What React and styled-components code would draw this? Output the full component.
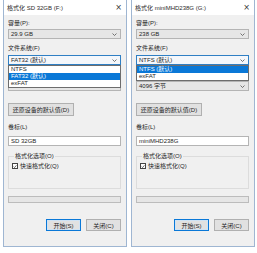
import React from "react";
import styled, { createGlobalStyle } from "styled-components";

const GlobalStyle = createGlobalStyle`
  html, body {
    margin: 0;
    padding: 0;
    background: #ffffff;
  }
  body {
    font-family: "Liberation Sans", "Noto Sans CJK SC", sans-serif;
    font-size: 6px;
    color: #1e1e1e;
  }
`;

const dialogs = [
  {
    title: "格式化 SD 32GB (F:)",
    capacity: "29.9 GB",
    fs: "FAT32 (默认)",
    options: ["NTFS", "FAT32 (默认)", "exFAT"],
    selected: 1,
    alloc: "32 KB",
    volume: "SD 32GB",
  },
  {
    title: "格式化 miniMHD238G (G:)",
    capacity: "238 GB",
    fs: "NTFS (默认)",
    options: ["NTFS (默认)", "exFAT"],
    selected: 0,
    alloc: "4096 字节",
    volume: "miniMHD238G",
  },
];

const Chevron = () => (
  <svg width="5" height="3" viewBox="0 0 5 3">
    <polyline points="0.5,0.5 2.5,2.5 4.5,0.5" fill="none" stroke="#555" strokeWidth="0.8" />
  </svg>
);

const FormatDialog = ({ title, capacity, fs, options, selected, alloc, volume }) => {
  // the open list hides the allocation row when it has three entries
  const allocCovered = options.length > 2;
  return (
    <Window>
      <TitleBar>
        <span>{title}</span>
        <Close>×</Close>
      </TitleBar>
      <Body>
        <Label $top={4}>容量(P):</Label>
        <Combo $top={2}>
          <span>{capacity}</span>
          <Chevron />
        </Combo>
        <Label $top={5}>文件系统(F)</Label>
        <Combo $top={3} $open>
          <span>{fs}</span>
          <Chevron />
          <List>
            {options.map((opt, i) => (
              <Option key={opt} $active={i === selected}>
                {opt}
              </Option>
            ))}
          </List>
        </Combo>
        <Label $top={5} $covered>分配单元大小(A)</Label>
        <Combo $top={3}>
          <Value $covered={allocCovered}>{alloc}</Value>
          <Chevron />
        </Combo>
        <RestoreButton>还原设备的默认值(D)</RestoreButton>
        <Label $top={7}>卷标(L)</Label>
        <TextBox>{volume}</TextBox>
        <Group>
          <legend>格式化选项(O)</legend>
          <CheckRow>
            <CheckBox>
              <svg width="5" height="5" viewBox="0 0 5 5">
                <polyline points="0.8,2.6 2,3.8 4.3,1" fill="none" stroke="#222" strokeWidth="0.8" />
              </svg>
            </CheckBox>
            快速格式化(Q)
          </CheckRow>
        </Group>
        <Progress />
        <ButtonRow>
          <Button $primary>开始(S)</Button>
          <Button>关闭(C)</Button>
        </ButtonRow>
      </Body>
    </Window>
  );
};

export default function App() {
  return (
    <>
      <GlobalStyle />
      <Page>
        {dialogs.map((d) => (
          <FormatDialog key={d.title} {...d} />
        ))}
      </Page>
    </>
  );
}

const Page = styled.div`
  display: flex;
  gap: 4px;
  padding-left: 3px;
  width: 257px;
  height: 253px;
  box-sizing: border-box;
  overflow: hidden;
`;

const Window = styled.div`
  box-sizing: border-box;
  width: 124px;
  height: 247px;
  border: 1px solid #9fb6d2;
  border-top: none;
  background: #f0f0f0;
  display: flex;
  flex-direction: column;
`;

const TitleBar = styled.div`
  height: 15px;
  background: #ffffff;
  display: flex;
  align-items: center;
  justify-content: space-between;
  padding: 0 4px 0 3px;
  color: #2a2a2a;
`;

const Close = styled.span`
  font-family: "DejaVu Sans", sans-serif;
  font-size: 8px;
  color: #333;
`;

const Body = styled.div`
  display: flex;
  flex-direction: column;
  align-items: stretch;
  padding: 0 5px 0 4px;
`;

const Label = styled.div`
  height: 8px;
  line-height: 8px;
  margin-top: ${(p) => p.$top}px;
  white-space: nowrap;
  visibility: ${(p) => (p.$covered ? "hidden" : "visible")};
`;

const Value = styled.span`
  visibility: ${(p) => (p.$covered ? "hidden" : "visible")};
`;

const Combo = styled.div`
  position: relative;
  box-sizing: border-box;
  height: 10px;
  margin-top: ${(p) => p.$top}px;
  display: flex;
  align-items: center;
  justify-content: space-between;
  padding: 0 3px 0 2px;
  background: ${(p) => (p.$open ? "#f4f7fb" : "#e6e6e6")};
  border: 1px solid ${(p) => (p.$open ? "#2f7fc4" : "#b4b4b4")};
  line-height: 8px;
`;

const List = styled.div`
  position: absolute;
  top: 9px;
  left: -1px;
  right: -1px;
  z-index: 2;
  background: #ffffff;
  border: 1px solid #6d6d6d;
`;

const Option = styled.div`
  height: 7px;
  line-height: 7px;
  padding-left: 2px;
  background: ${(p) => (p.$active ? "#0a78d7" : "transparent")};
  color: ${(p) => (p.$active ? "#ffffff" : "#1e1e1e")};
`;

const RestoreButton = styled.div`
  box-sizing: border-box;
  align-self: flex-start;
  width: 66px;
  height: 13px;
  margin-top: 12px;
  background: #e1e1e1;
  border: 1px solid #b0b0b0;
  display: flex;
  align-items: center;
  justify-content: center;
`;

const TextBox = styled.div`
  box-sizing: border-box;
  height: 10px;
  margin-top: 5px;
  background: #ffffff;
  border: 1px solid #b4b4b4;
  padding-left: 2px;
  line-height: 8px;
`;

const Group = styled.fieldset`
  box-sizing: border-box;
  margin: 6px 0 0 0;
  padding: 2px 0 0 3px;
  height: 37px;
  border: 1px solid #dcdcdc;

  & legend {
    padding: 0 1px;
    margin-left: 2px;
    height: 8px;
    line-height: 8px;
  }
`;

const CheckRow = styled.div`
  display: flex;
  align-items: center;
  gap: 2px;
  line-height: 8px;
`;

const CheckBox = styled.span`
  box-sizing: border-box;
  width: 6px;
  height: 6px;
  border: 1px solid #444;
  background: #fff;
  display: flex;
  align-items: center;
  justify-content: center;
`;

const Progress = styled.div`
  box-sizing: border-box;
  height: 7px;
  margin-top: 7px;
  background: #e6e6e6;
  border: 1px solid #bcbcbc;
`;

const ButtonRow = styled.div`
  display: flex;
  justify-content: flex-end;
  gap: 5px;
  margin-top: 16px;
`;

const Button = styled.div`
  box-sizing: border-box;
  width: 35px;
  height: 12px;
  display: flex;
  align-items: center;
  justify-content: center;
  background: #e1e1e1;
  border: 1px solid ${(p) => (p.$primary ? "#0a78d7" : "#b0b0b0")};
  box-shadow: ${(p) => (p.$primary ? "inset 0 0 0 1px #cfe3f5" : "none")};
`;
